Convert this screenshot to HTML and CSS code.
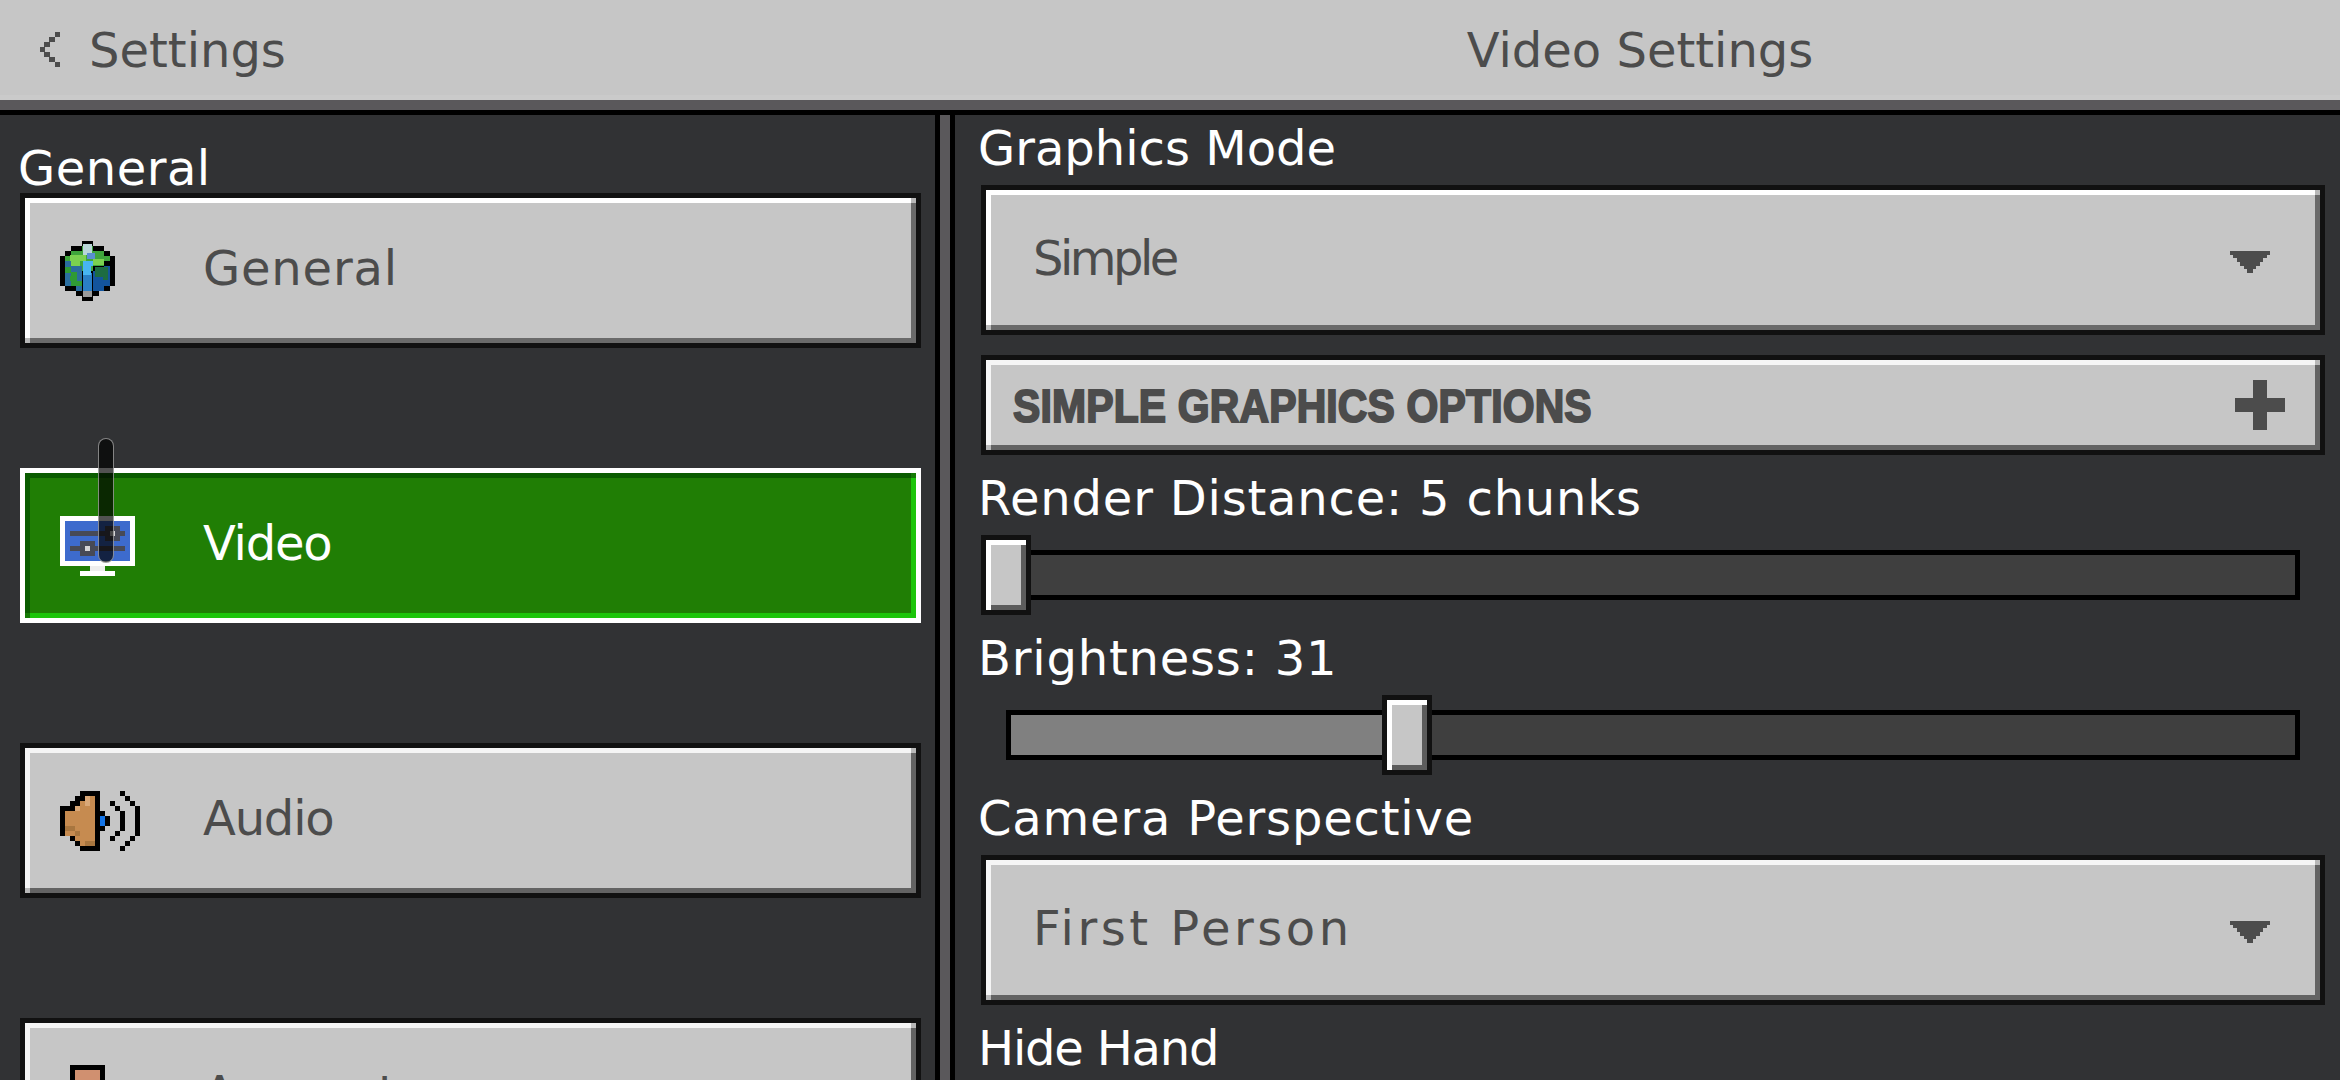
FILE: index.html
```html
<!DOCTYPE html>
<html lang="en">
<head>
    <meta charset="UTF-8">
    <title>Video Settings</title>
    <link rel="stylesheet" href="styles.css">
</head>
<body>
    <div class="topbar">
        <div class="topbar-left">
            <svg class="pixel back" width="20" height="35" viewBox="0 0 20 35"><path d="M15 0h5v5h-5zM9 5h6v5h-6zM4 10h6v5h-6zM0 15h5v5h-5zM4 20h6v5h-6zM9 25h6v5h-6zM15 30h5v5h-5z"/></svg>
            <span class="text">Settings</span>
        </div>
        <div class="topbar-title"><span class="text">Video Settings</span></div>
    </div>

    <div class="main">
        <div class="sidebar">
            <div class="text label spread-half">General</div>

            <div class="btn nav-btn">
                <span class="nav-icon">
                    <svg class="pixel" width="55" height="60" viewBox="0 0 55 60">
                        <path fill="#000" d="M22 0h11v5h11v5h6v5h5v30h-5v5h-11v5h-6v5h-11v-5h-6v-5h-11v-5h-5v-30h5v-5h6v-5h11z"/>
                        <path fill="#3fa53c" d="M22 5h11v5h11v5h6v5h-6v5h-11v5h-11v-5h-11v-5h-6v-5h6v-5h11z"/>
                        <path fill="#7bd150" d="M10 14h16v6h-6v5h-9v-5h-1zM33 18h11v6h-11z"/>
                        <path fill="#2a6d9e" d="M5 20h6v5h11v25h-6v-5h-11z"/>
                        <path fill="#2f9a35" d="M5 26h6v6h-6zM11 31h6v9h5v5h-11v-5h-1v-5h1z"/>
                        <path fill="#13549c" d="M33 30h11v-5h6v20h-6v5h-11z"/>
                        <path fill="#1d6c42" d="M35 26h13v13h-5v-3h-8z"/>
                        <path fill="#2a7fc6" d="M23 32h9v23h-9z"/>
                        <path fill="#47b5f2" d="M23 20h10v5h-2v9h-8z"/>
                        <path fill="#b9d6d8" d="M23 3h9v11h-9z"/>
                        <path fill="#5a8fd0" d="M27 12h8v6h-8z"/>
                        <path fill="#9a9a9a" d="M23 50h9v6h-9z"/>
                    </svg>
                </span>
                <span class="text btn-text spread-1">General</span>
            </div>

            <div class="btn nav-btn active">
                <span class="nav-icon">
                    <svg class="pixel" width="75" height="60" viewBox="0 0 75 60">
                        <path fill="#fff" d="M0 0h75v50h-75zM20 55h35v5h-35z"/>
                        <path fill="#eeeeee" d="M30 50h15v5h-15z"/>
                        <path fill="#3d6bcd" d="M5 5h65v40h-65z"/>
                        <path fill="#474a56" d="M10 15h55v5h-55zM10 30h55v5h-55zM45 10h15v15h-15zM20 25h15v15h-15z"/>
                        <path fill="#d5d5d5" d="M50 15h5v5h-5zM25 30h5v5h-5z"/>
                    </svg>
                </span>
                <span class="text btn-text squeeze-1">Video</span>
            </div>

            <div class="btn nav-btn worn">
                <span class="nav-icon">
                    <svg class="pixel" width="80" height="60" viewBox="0 0 80 60">
                        <path fill="#000" d="M20 0h20v20h5v5h5v10h-5v5h-5v20h-20v-5h-5v-5h-5v-5h-10v-30h10v-5h5v-5h5z"/>
                        <path fill="#c68b50" d="M25 5h10v50h-15v-5h-5v-5h-10v-25h10v-5h5v-5h5z"/>
                        <path fill="#d9a878" d="M25 5h5v10h-5zM15 15h5v5h-5z"/>
                        <path fill="#a8763f" d="M5 35h10v5h-10zM25 50h10v5h-10zM15 40h5v5h-5z"/>
                        <path fill="#1273e6" d="M40 25h5v10h-5z"/>
                        <path fill="#000" d="M50 10h5v5h-5zM55 15h5v5h-5zM60 20h5v20h-5zM55 40h5v5h-5zM50 45h5v5h-5zM60 0h5v5h-5zM65 5h5v5h-5zM70 10h5v5h-5zM75 15h5v30h-5zM70 45h5v5h-5zM65 50h5v5h-5zM60 55h5v5h-5z"/>
                    </svg>
                </span>
                <span class="text btn-text squeeze-1">Audio</span>
            </div>

            <div class="btn nav-btn worn">
                <span class="nav-icon">
                    <svg class="pixel" width="75" height="61" viewBox="0 0 75 61">
                        <path fill="#000" d="M10 0h35v61h-35z"/>
                        <path fill="#d09070" d="M15 5h25v56h-25z"/>
                    </svg>
                </span>
                <span class="text btn-text">Account</span>
            </div>

            <div class="scroll-thumb"></div>
        </div>

        <div class="divider"></div>

        <div class="content">
            <div class="text label">Graphics Mode</div>
            <div class="btn dropdown">
                <span class="text btn-text squeeze-3">Simple</span>
                <svg class="pixel arrow" width="40" height="22" viewBox="0 0 40 22"><path d="M0 0h40v4h-3v3h-4v4h-3v4h-4v3h-3v4h-6v-4h-3v-3h-4v-4h-3v-4h-4v-3h-3z"/></svg>
            </div>

            <div class="btn expander worn">
                <span class="text heading">SIMPLE GRAPHICS OPTIONS</span>
                <svg class="pixel plus" width="50" height="50" viewBox="0 0 50 50"><path d="M18 0h14v18h18v14h-18v18h-14v-18h-18v-14h18z"/></svg>
            </div>

            <div class="text label spread-1">Render Distance: 5 chunks</div>
            <div class="slider">
                <div class="track">
                    <div class="thumb" style="left: -30px"></div>
                </div>
            </div>

            <div class="text label spread-1">Brightness: 31</div>
            <div class="slider">
                <div class="track">
                    <div class="fill" style="width: 371px"></div>
                    <div class="thumb" style="left: 371px"></div>
                </div>
            </div>

            <div class="text label spread-1">Camera Perspective</div>
            <div class="btn dropdown worn">
                <span class="text btn-text spread-3">First Person</span>
                <svg class="pixel arrow" width="40" height="22" viewBox="0 0 40 22"><path d="M0 0h40v4h-3v3h-4v4h-3v4h-4v3h-3v4h-6v-4h-3v-3h-4v-4h-3v-4h-4v-3h-3z"/></svg>
            </div>

            <div class="text label squeeze-1">Hide Hand</div>
        </div>
    </div>
</body>
</html>
```

FILE: styles.css
```css
html, body {
    margin: 0;
    height: 1080px;
    overflow: hidden;
}
body {
    background-color: #313234;
    font-family: "DejaVu Sans", sans-serif;
    color: #4c4c4c;
}
.pixel {
    display: block;
    shape-rendering: crispEdges;
    fill: #4c4c4c;
    flex: none;
}
/* text boxes are as tall as the capitals so the layout can be read off the picture */
.text {
    display: block;
    height: 35px;
    font-size: 48px;
    line-height: 37px;
    white-space: nowrap;
}
.spread-half {
    letter-spacing: 0.5px;
}
.spread-1 {
    letter-spacing: 0.8px;
}
.spread-3 {
    letter-spacing: 3.5px;
}
.squeeze-1 {
    letter-spacing: -1.2px;
}
.squeeze-3 {
    letter-spacing: -3.5px;
}

.topbar {
    display: flex;
    height: 100px;
    background-color: #c6c6c6;
    box-shadow: inset 0 -5px 0 #cacaca;
    border-bottom: 10px solid #5a585b;
}
.topbar-left {
    display: flex;
    gap: 29px;
    width: 915px;
    padding: 32px 0 0 40px;
}
.topbar-title {
    width: 1370px;
    padding-top: 32px;
    text-align: center;
}

.main {
    display: flex;
    height: 965px;
    border-top: 5px solid #000;
    overflow: hidden;
}
.sidebar {
    position: relative;
    width: 915px;
    padding: 35px 0 0 20px;
    border-right: 5px solid #000;
    flex: none;
}
.sidebar .label {
    color: #fff;
    margin: 0 0 8px -2px;
}
.divider {
    width: 10px;
    flex: none;
    background-color: #5a585b;
}
.content {
    flex: 1;
    padding: 15px 0 0 25px;
    border-left: 5px solid #000;
}
.content .label {
    color: #fff;
    margin: 0 0 20px -2px;
}

.btn {
    position: relative;
    display: flex;
    align-items: center;
    box-sizing: border-box;
    border: 5px solid #111;
    background-color: #c6c6c6;
    box-shadow: inset 5px 5px 0 #fff, inset -5px -5px 0 #6a6a6a;
}
.btn::before,
.btn::after {
    content: "";
    position: absolute;
    width: 5px;
    height: 5px;
    background-color: #b8b8b8;
}
.btn::before {
    top: 0;
    right: 0;
}
.btn::after {
    bottom: 0;
    left: 0;
}
.worn {
    box-shadow: inset 5px 5px 0 #f5f5f5, inset -5px -5px 0 #636363;
}
.btn-text {
    margin-top: -6px;
}

.nav-btn {
    width: 901px;
    height: 155px;
    margin-bottom: 120px;
    padding-left: 35px;
}
.nav-icon {
    width: 143px;
    flex: none;
}
.nav-btn.active {
    border-color: #fff;
    background-color: #207e05;
    color: #fff;
    box-shadow: inset 5px 5px 0 #0a5c00, inset -5px -5px 0 #1cc50a;
}
.nav-btn.active::before,
.nav-btn.active::after {
    background-color: #157a05;
}
.scroll-thumb {
    position: absolute;
    top: 323px;
    left: 98px;
    width: 16px;
    height: 125px;
    box-sizing: border-box;
    border: 1px solid rgba(210, 210, 210, 0.6);
    border-radius: 8px;
    background-color: rgba(0, 0, 0, 0.68);
}

.dropdown {
    justify-content: space-between;
    width: 1344px;
    height: 150px;
    margin: 0 0 25px 1px;
    padding: 0 50px 0 47px;
}
.arrow {
    margin-top: 4px;
}
.expander {
    justify-content: space-between;
    width: 1344px;
    height: 100px;
    margin: -5px 0 25px 1px;
    padding: 0 35px 0 27px;
}
.heading {
    margin-top: -2px;
    font-family: "Liberation Sans", sans-serif;
    font-weight: bold;
    font-size: 47px;
    letter-spacing: 0.2px;
    -webkit-text-stroke: 2px #4c4c4c;
    transform: scaleX(0.87);
    transform-origin: left center;
}

.slider {
    width: 1319px;
    height: 80px;
    margin: 0 0 25px 1px;
    padding: 15px 0 0 25px;
    box-sizing: border-box;
}
.track {
    position: relative;
    box-sizing: border-box;
    height: 50px;
    border: 5px solid #000;
    background-color: #3f3f3f;
}
.fill {
    height: 100%;
    background-color: #808080;
}
.thumb {
    position: absolute;
    top: -20px;
    width: 50px;
    height: 80px;
    box-sizing: border-box;
    border: 5px solid #111;
    background-color: #c6c6c6;
    box-shadow: inset 5px 5px 0 #fff, inset -5px -5px 0 #5c5c5c;
}
```
